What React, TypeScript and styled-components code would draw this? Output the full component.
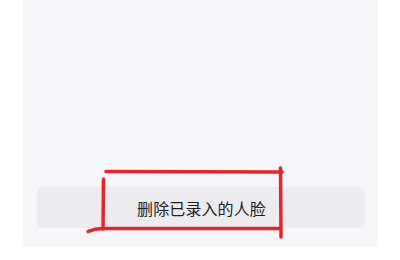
import React from "react";
import styled, { createGlobalStyle } from "styled-components";

const Global = createGlobalStyle`
  html, body {
    margin: 0;
    padding: 0;
    background: #ffffff;
  }
  body {
    font-family: "Noto Sans CJK SC", "Noto Sans", sans-serif;
  }
`;

const Stage = styled.div`
  position: relative;
  width: 400px;
  height: 260px;
  overflow: hidden;
  background: #ffffff;
`;

const Sheet = styled.div`
  margin-left: 23px;
  width: 355px;
  height: 247px;
  background: #f5f6fa;
  display: flex;
  flex-direction: column;
  justify-content: flex-end;
  align-items: flex-start;
  padding: 0 0 19px 14px;
  box-sizing: border-box;
`;

const ActionButton = styled.button`
  width: 328px;
  height: 41px;
  border: none;
  border-radius: 6px;
  background: #ececf0;
  color: #1c1c1e;
  font-family: "Noto Sans CJK SC", "Noto Sans", sans-serif;
  font-size: 16px;
  letter-spacing: 0.1px;
  display: flex;
  align-items: center;
  justify-content: center;
  padding: 0 0 0 1px;
  cursor: pointer;
`;

const Markup = styled.svg`
  position: absolute;
  left: 0;
  top: 0;
  width: 400px;
  height: 260px;
  pointer-events: none;
`;

export default function App() {
  return (
    <>
      <Global />
      <Stage>
        <Sheet>
          <ActionButton>删除已录入的人脸</ActionButton>
        </Sheet>
        <Markup viewBox="0 0 400 260">
          <g
            stroke="#e5252a"
            strokeWidth={3.5}
            strokeLinecap="round"
            fill="none"
          >
            <path d="M106 171.5 L282 172" />
            <path d="M103.5 179 L103 229" />
            <path d="M88 231.5 Q95 228.5 103 228.5 L280 228.5" />
            <path d="M280.5 168 L281 237" />
          </g>
        </Markup>
      </Stage>
    </>
  );
}
